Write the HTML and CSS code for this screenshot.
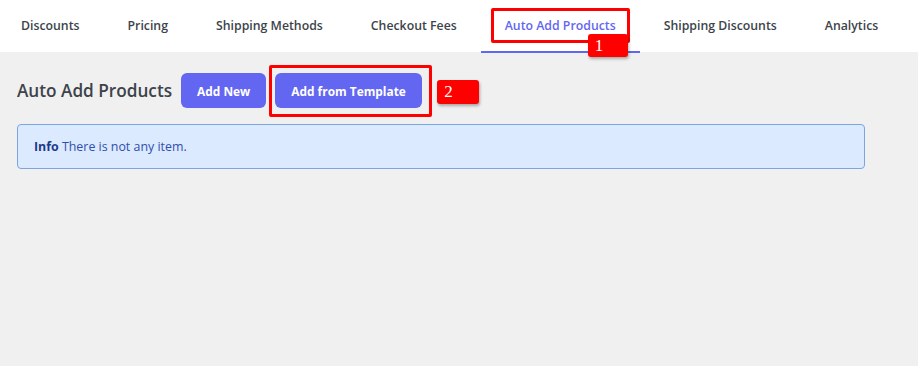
FILE: index.html
```html
<!DOCTYPE html>
<html lang="en">
<head>
    <meta charset="UTF-8">
    <meta name="viewport" content="width=device-width, initial-scale=1.0">
    <title>Auto Add Products</title>
    <link rel="stylesheet" href="styles.css">
</head>
<body>
    <nav class="tabs">
        <a class="tab">Discounts</a>
        <a class="tab">Pricing</a>
        <a class="tab">Shipping Methods</a>
        <a class="tab">Checkout Fees</a>
        <a class="tab active">Auto Add Products<span class="mark-box mark-tab"></span><span class="mark-label label-tab">1</span></a>
        <a class="tab">Shipping Discounts</a>
        <a class="tab">Analytics</a>
    </nav>

    <main class="content">
        <div class="title-row">
            <h2 class="page-title">Auto Add Products</h2>
            <button class="btn">Add New</button>
            <button class="btn btn-template">Add from Template<span class="mark-box mark-btn"></span><span class="mark-label label-btn">2</span></button>
        </div>

        <div class="notice">
            <strong>Info</strong> There is not any item.
        </div>
    </main>
</body>
</html>
```

FILE: styles.css
```css
body {
    margin: 0;
    background-color: #f0f0f1;
    font-family: 'Open Sans', 'Noto Sans', sans-serif;
    color: #3c434a;
}

.tabs {
    display: flex;
    height: 52px;
    background-color: white;
    margin-left: -3px;
}

.tab {
    position: relative;
    flex-shrink: 0;
    display: flex;
    align-items: center;
    padding: 0 24px;
    font-size: 12.3px;
    font-weight: 600;
    white-space: nowrap;
    color: #3c434a;
    border-bottom: 2px solid transparent;
    box-sizing: border-box;
    height: 53px;
    cursor: pointer;
}

.tab.active {
    color: #6366f1;
    border-bottom-color: #6366f1;
}

.content {
    padding: 21px 53px 0 17px;
}

.title-row {
    display: flex;
    align-items: center;
    gap: 9px;
}

.page-title {
    margin: 0;
    font-size: 17.2px;
    font-weight: 600;
    white-space: nowrap;
    color: #3c434a;
}

.btn {
    position: relative;
    height: 35px;
    padding: 0 16px;
    background-color: #6366f1;
    color: white;
    border: none;
    border-radius: 6px;
    font-family: inherit;
    font-size: 11.9px;
    font-weight: 700;
    white-space: nowrap;
    cursor: pointer;
}

.notice {
    margin-top: 16px;
    padding: 13px 16px;
    background-color: #dbeafe;
    border: 1px solid #7aa5e0;
    border-radius: 4px;
    font-size: 12.4px;
    color: #2f4fae;
}

.notice strong {
    color: #1e3a8a;
}

/* annotation marks */
.mark-box {
    position: absolute;
    border: 3px solid #f00;
    border-radius: 2px;
    box-sizing: border-box;
}

.mark-label {
    position: absolute;
    background-color: #f00;
    color: white;
    font-family: 'Liberation Serif', serif;
    font-size: 17px;
    font-weight: 400;
    line-height: 24px;
    border-radius: 3px;
    box-shadow: 1px 2px 3px rgba(0, 0, 0, 0.3);
    box-sizing: border-box;
}

.mark-tab {
    left: 10px;
    top: 8px;
    width: 139px;
    height: 35px;
}

.label-tab {
    left: 107px;
    top: 34px;
    width: 40px;
    height: 23px;
    padding-left: 7px;
    line-height: 23px;
}

.mark-btn {
    left: -6px;
    top: -8px;
    width: 163px;
    height: 52px;
}

.label-btn {
    left: 162px;
    top: 7px;
    width: 42px;
    height: 24px;
    padding-left: 7px;
    text-align: left;
}
```
